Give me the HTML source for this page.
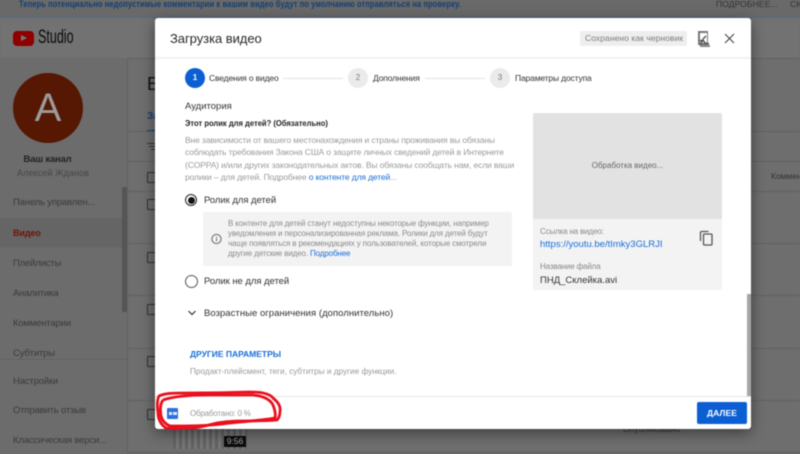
<!DOCTYPE html>
<html lang="ru"><head><meta charset="utf-8">
<style>
html,body{margin:0;padding:0;width:800px;height:454px;overflow:hidden;background:#6e6e6e}
body{font-family:"Liberation Sans",sans-serif;position:relative}
#w{position:absolute;left:0;top:0;width:800px;height:454px;overflow:hidden;filter:blur(.4px)}
.a{position:absolute;white-space:nowrap}
.n{color:#3a3a3a;font-size:9.5px;line-height:14px;left:13px;font-weight:400;letter-spacing:-.17px}
.l{background:#616161;height:1px;position:absolute}
.c{position:absolute;left:147px;width:10px;height:9px;border:1px solid #2e2e2e;border-radius:1px}
.g{color:#9a9a9a;font-size:8.5px;letter-spacing:-.13px}
.s{font-size:8.5px;line-height:14px;color:#333;letter-spacing:-.15px}
.t{font-size:8px;line-height:12px;color:#888;letter-spacing:-.15px}
</style></head><body><div id="w">
<div class="a" style="left:0;top:0;width:800px;height:17px;background:#696969"></div>
<div class="a" style="left:0;top:17px;width:800px;height:1px;background:#4c6a8c"></div>
<div class="a" style="left:19px;top:-1px;font-size:9.5px;line-height:12px;color:#123f73;font-weight:700;letter-spacing:.12px;transform:scaleX(.792);transform-origin:0 0">Теперь потенциально недопустимые комментарии к вашим видео будут по умолчанию отправляться на проверку.</div>
<div class="a" style="left:716px;top:-2px;font-size:8.5px;line-height:12px;color:#333;letter-spacing:.1px">ПОДРОБНЕЕ...</div>
<div class="a" style="left:790px;top:-2px;font-size:8.5px;line-height:12px;color:#333">СКРЫТЬ</div>

<div class="a" style="left:0;top:18px;width:800px;height:40px;background:#727272"></div>
<div class="l" style="left:0;top:58px;width:800px"></div>
<div class="a" style="left:13px;top:31px;width:21px;height:15px;background:#8e0000;border-radius:4px"></div>
<div class="a" style="left:21px;top:35px;width:0;height:0;border-left:6px solid #777;border-top:3.5px solid transparent;border-bottom:3.5px solid transparent"></div>
<div class="a" style="left:38px;top:27px;font-size:19px;line-height:22px;color:#0a0a0a;transform:scaleX(.66);transform-origin:0 0;font-weight:400">Studio</div>

<div class="a" style="left:0;top:58px;width:127px;height:396px;background:#6c6c6c"></div>
<div class="a" style="left:127px;top:58px;width:1px;height:396px;background:#626262"></div>
<div class="a" style="left:13px;top:73px;width:70px;height:70px;border-radius:50%;background:#561703"></div>
<div class="a" style="left:13px;top:88px;width:70px;text-align:center;font-size:40px;line-height:41px;color:#9b9b9b">А</div>
<div class="a" style="left:0;top:153px;width:95px;text-align:center;font-size:9.5px;line-height:14px;color:#222;font-weight:700;letter-spacing:-.2px">Ваш канал</div>
<div class="a" style="left:17px;top:167px;font-size:9px;line-height:13px;color:#474747;letter-spacing:.1px">Алексей Жданов</div>
<div class="a" style="left:122px;top:187px;width:5px;height:125px;background:#555"></div>
<div class="a" style="left:0;top:218px;width:122px;height:29px;background:#656565"></div>
<div class="a n" style="top:196px">Панель управлен...</div>
<div class="a n" style="top:226px;color:#6f1208;font-weight:700;font-size:9px;letter-spacing:-.1px">Видео</div>
<div class="a n" style="top:257px">Плейлисты</div>
<div class="a n" style="top:287px">Аналитика</div>
<div class="a n" style="top:317px">Комментарии</div>
<div class="a n" style="top:347px">Субтитры</div>
<div class="l" style="left:0;top:359px;width:127px"></div>
<div class="a n" style="top:375px">Настройки</div>
<div class="a n" style="top:404px">Отправить отзыв</div>
<div class="a n" style="top:434px">Классическая верси...</div>

<div class="a" style="left:147px;top:73px;font-size:18px;line-height:22px;color:#111">В</div>
<div class="a" style="left:147px;top:110px;font-size:10px;line-height:14px;color:#123f73;font-weight:700">За</div>
<div class="a" style="left:147px;top:130px;width:8px;height:2px;background:#123f73"></div>
<div class="l" style="left:128px;top:131px;width:672px"></div>
<div class="a" style="left:147px;top:143px;width:9px;height:1px;background:#333"></div>
<div class="a" style="left:149px;top:146px;width:6px;height:1px;background:#333"></div>
<div class="a" style="left:151px;top:149px;width:4px;height:1px;background:#333"></div>
<div class="l" style="left:128px;top:161px;width:672px"></div>
<div class="l" style="left:128px;top:191px;width:672px"></div>
<div class="l" style="left:128px;top:243px;width:672px"></div>
<div class="l" style="left:128px;top:295px;width:672px"></div>
<div class="l" style="left:128px;top:348px;width:672px"></div>
<div class="l" style="left:128px;top:400px;width:672px"></div>
<div class="l" style="left:128px;top:452px;width:672px"></div>
<div class="c" style="top:172px"></div>
<div class="c" style="top:199px"></div>
<div class="c" style="top:252px"></div>
<div class="c" style="top:304px"></div>
<div class="c" style="top:356px"></div>
<div class="c" style="top:409px"></div>
<div class="a" style="left:771px;top:170px;font-size:8.5px;line-height:13px;color:#333">Комментарии</div>
<div class="a" style="left:173px;top:429px;width:74px;height:20px;background:repeating-linear-gradient(90deg,#626262 0 3px,#777 3px 6px)"></div>
<div class="a" style="left:224px;top:436px;width:22px;height:11px;background:#0c0c0c;color:#aaa;font-size:8.5px;line-height:11px;text-align:center">9:56</div>
<div class="a" style="left:623px;top:423px;font-size:8.5px;color:#333;line-height:12px">Опубликовано</div>

<div class="a" style="left:155px;top:18px;width:596px;height:411px;background:#fff;border-radius:3px;box-shadow:0 4px 14px rgba(0,0,0,.45)"></div>
<div class="a" style="left:155px;top:57px;width:596px;height:2px;background:#f1f1f1"></div>
<div class="a" style="left:170px;top:29px;font-size:13px;line-height:19px;color:#282828;letter-spacing:-.05px">Загрузка видео</div>
<div class="a" style="left:580px;top:31px;width:107px;height:15px;background:#eee;border-radius:2px"></div>
<div class="a" style="left:585px;top:32px;font-size:8.5px;line-height:13px;color:#7b7b7b;letter-spacing:.07px">Сохранено как черновик</div>
<svg class="a" style="left:697px;top:30px" width="14" height="17" viewBox="0 0 14 17"><rect x="1" y="1" width="10" height="14" fill="#777"/><rect x="3" y="3" width="7" height="10" fill="#fff"/><path d="M3 15l3-5 2 3 4 1M6 9l3-3M6 10l-3 1" stroke="#555" stroke-width="1.500" fill="none"/><rect x="3" y="15" width="10" height="2" fill="#888"/></svg>
<svg class="a" style="left:724px;top:32px" width="11" height="13" viewBox="0 0 11 13"><path d="M1 2l9 9M10 2l-9 9" stroke="#444" stroke-width="1.100" fill="none"/></svg>

<div class="a" style="left:185px;top:68px;width:20px;height:20px;border-radius:50%;background:#0b5fd3;color:#fff;font-size:8px;line-height:20px;text-align:center;font-weight:700">1</div>
<div class="a s" style="left:209px;top:71px">Сведения о видео</div>
<div class="a" style="left:283px;top:78px;width:60px;height:1px;background:#e2e2e2"></div>
<div class="a" style="left:348px;top:68px;width:20px;height:20px;border-radius:50%;background:#ebebeb;color:#777;font-size:8px;line-height:20px;text-align:center">2</div>
<div class="a s" style="left:373px;top:71px">Дополнения</div>
<div class="a" style="left:425px;top:78px;width:60px;height:1px;background:#e2e2e2"></div>
<div class="a" style="left:490px;top:68px;width:20px;height:20px;border-radius:50%;background:#ebebeb;color:#777;font-size:8px;line-height:20px;text-align:center">3</div>
<div class="a s" style="left:515px;top:71px">Параметры доступа</div>

<div class="a" style="left:185px;top:99px;font-size:9.500px;line-height:15px;color:#333">Аудитория</div>
<div class="a" style="left:185px;top:117px;font-size:8.500px;line-height:13px;color:#222;font-weight:700;transform:scaleX(.894);transform-origin:0 0">Этот ролик для детей? (Обязательно)</div>
<div class="a g" style="left:185px;top:134px;line-height:12.400px">Вне зависимости от вашего местонахождения и страны проживания вы обязаны<br>соблюдать требования Закона США о защите личных сведений детей в Интернете<br>(COPPA) и/или других законодательных актов. Вы обязаны сообщать нам, если ваши<br>ролики – для детей. Подробнее <span style="color:#1a6ed8">о контенте для детей</span>...</div>

<div class="a" style="left:185px;top:194px;width:10px;height:10px;border:1.500px solid #222;border-radius:50%"></div>
<div class="a" style="left:188px;top:197px;width:7px;height:7px;background:#111;border-radius:50%"></div>
<div class="a" style="left:204px;top:194px;font-size:9.500px;line-height:14px;color:#333;letter-spacing:-.05px">Ролик для детей</div>
<div class="a" style="left:203px;top:212px;width:309px;height:54px;background:#f3f3f3;border-radius:2px"></div>
<svg class="a" style="left:211px;top:233px" width="11" height="12" viewBox="0 0 11 12"><circle cx="5.500" cy="6" r="4.600" fill="none" stroke="#666" stroke-width="1"/><rect x="5" y="5.200" width="1" height="3" fill="#666"/><rect x="5" y="3.500" width="1" height="1" fill="#666"/></svg>
<div class="a" style="left:228px;top:219px;font-size:8px;line-height:10.100px;color:#8a8a8a;letter-spacing:-.13px">В контенте для детей станут недоступны некоторые функции, например<br>уведомления и персонализированная реклама. Ролики для детей будут<br>чаще появляться в рекомендациях у пользователей, которые смотрели<br>другие детские видео. <span style="color:#1a6ed8">Подробнее</span></div>

<div class="a" style="left:185px;top:275px;width:11px;height:11px;border:1.200px solid #555;border-radius:50%"></div>
<div class="a" style="left:204px;top:275px;font-size:9.500px;line-height:14px;color:#333;letter-spacing:-.05px">Ролик не для детей</div>
<svg class="a" style="left:187px;top:309px" width="10" height="8" viewBox="0 0 10 8"><path d="M1.500 2l3.500 3.500L8.500 2" stroke="#333" stroke-width="1.200" fill="none"/></svg>
<div class="a" style="left:204px;top:307px;font-size:9.500px;line-height:14px;color:#333;letter-spacing:.04px">Возрастные ограничения (дополнительно)</div>
<div class="a" style="left:190px;top:348px;font-size:8.500px;line-height:13px;color:#1a6ed8;font-weight:700">ДРУГИЕ ПАРАМЕТРЫ</div>
<div class="a" style="left:190px;top:366px;font-size:8.200px;line-height:12px;color:#999">Продакт-плейсмент, теги, субтитры и другие функции.</div>

<div class="a" style="left:533px;top:113px;width:189px;height:106px;background:#e2e2e2;border-radius:2px 2px 0 0"></div>
<div class="a" style="left:533px;top:160px;width:189px;text-align:center;font-size:8px;line-height:12px;color:#666">Обработка видео...</div>
<div class="a" style="left:533px;top:219px;width:189px;height:71px;background:#f3f3f3;border-radius:0 0 2px 2px"></div>
<div class="a t" style="left:540px;top:226px">Ссылка на видео:</div>
<div class="a" style="left:540px;top:238px;font-size:9.500px;line-height:14px;color:#1a6ed8">https://youtu.be/tImky3GLRJI</div>
<svg class="a" style="left:699px;top:230px" width="15" height="16" viewBox="0 0 15 16"><path d="M1.500 11V2.500a1 1 0 0 1 1-1h7" stroke="#555" stroke-width="1.300" fill="none"/><rect x="4.500" y="4" width="8.500" height="11" rx="1" stroke="#555" stroke-width="1.300" fill="none"/></svg>
<div class="a t" style="left:540px;top:261px">Название файла</div>
<div class="a" style="left:540px;top:274px;font-size:9.500px;line-height:14px;color:#333">ПНД_Склейка.avi</div>

<div class="a" style="left:747px;top:294px;width:4px;height:102px;background:#a6a6a6"></div>
<div class="a" style="left:155px;top:396px;width:596px;height:1px;background:#e6e6e6"></div>
<div class="a" style="left:167px;top:408px;width:11px;height:11px;background:#2e6fd9;border-radius:1px"></div>
<div class="a" style="left:168.500px;top:411.500px;width:3.500px;height:3.500px;background:#dfe9fa"></div>
<div class="a" style="left:173px;top:411.500px;width:3.500px;height:3.500px;background:#dfe9fa"></div>
<div class="a" style="left:190px;top:407px;font-size:8px;line-height:13px;color:#999;letter-spacing:-.2px">Обработано: 0 %</div>
<div class="a" style="left:697px;top:402px;width:50px;height:22px;background:#0b5fd3;border-radius:2px;color:#fff;font-size:8.500px;line-height:22px;text-align:center;font-weight:700;letter-spacing:.1px">ДАЛЕЕ</div>

<svg class="a" style="left:150px;top:385px" width="140" height="50" viewBox="150 385 140 50"><path d="M159 396C165 393 173 393 190 393C205 393 220 393 250 392C262 392 270 394 273 398C278 402 281 406 280 411C280 415 279 418 277 420C265 421 250 421 240 421C230 421 225 422 217 423C205 426 198 428 190 428C180 428 172 429 166 428C161 425 158 419 158 413C157 406 157 400 159 396Z" fill="none" stroke="#ea0f1d" stroke-width="2.800"/><path d="M163 400C175 396 190 395 207 395C225 395 240 395 253 395C263 396 270 399 273 405C275 410 276 414 275 418C265 420 250 421 230 423C210 426 190 426 170 426C165 424 162 420 161 416C160 410 160 404 163 400" fill="none" stroke="#ea0f1d" stroke-width="2.800"/></svg>
</div></body></html>
